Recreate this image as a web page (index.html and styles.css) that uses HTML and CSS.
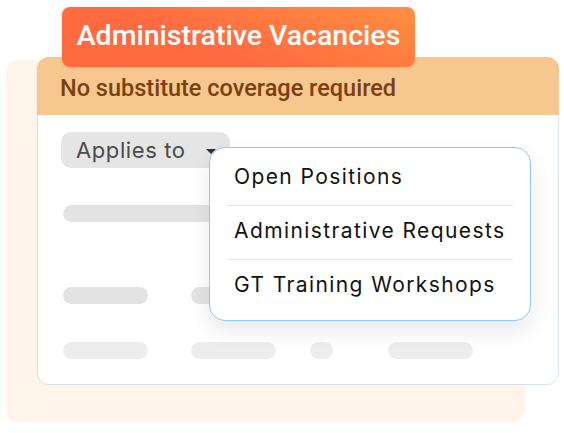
FILE: index.html
```html
<!DOCTYPE html>
<html lang="en">
<head>
    <meta charset="UTF-8">
    <meta name="viewport" content="width=device-width, initial-scale=1.0">
    <title>Administrative Vacancies</title>
    <link rel="stylesheet" href="styles.css">
</head>
<body>
    <div class="scene">
        <div class="backdrop"></div>

        <div class="tab">Administrative Vacancies</div>

        <div class="card">
            <div class="card-head">No substitute coverage required</div>
            <div class="card-body">
                <div class="select">
                    <span>Applies to</span>
                    <span class="caret"></span>
                </div>

                <div class="skeleton row-one">
                    <span class="bar wide"></span>
                </div>
                <div class="skeleton row-two">
                    <span class="bar"></span>
                    <span class="bar gap-a"></span>
                </div>
                <div class="skeleton row-three">
                    <span class="bar light"></span>
                    <span class="bar light gap-a"></span>
                    <span class="bar light small gap-b"></span>
                    <span class="bar light gap-c"></span>
                </div>
            </div>

            <ul class="menu">
                <li>Open Positions</li>
                <li>Administrative Requests</li>
                <li>GT Training Workshops</li>
            </ul>
        </div>
    </div>
</body>
</html>
```

FILE: styles.css
```css
* {
    box-sizing: border-box;
}
body {
    margin: 0;
    background: #ffffff;
    font-family: Roboto, "Liberation Sans", sans-serif;
}
.scene {
    position: relative;
    width: 564px;
    height: 433px;
    padding-top: 7px;
}
.backdrop {
    position: absolute;
    left: 6px;
    top: 60px;
    width: 519px;
    height: 362px;
    background: #fef4ea;
    border-radius: 12px;
}
.tab {
    position: relative;
    z-index: 2;
    display: inline-block;
    margin-left: 62px;
    height: 60px;
    width: 353px;
    line-height: 58px;
    text-align: center;
    color: #ffffff;
    font-size: 28.5px;
    font-weight: 500;
    background: linear-gradient(200deg, #ff8f42 0%, #ff6b40 60%, #ff6a3f 100%);
    border-radius: 8px;
    box-shadow: 0 1px 3px rgba(200, 80, 30, 0.15);
}
.card {
    position: relative;
    z-index: 1;
    margin: -10px 0 0 37px;
    width: 522px;
    height: 328px;
    background: #ffffff;
    border: 1px solid #d2e3f1;
    border-radius: 12px;
}
.card-head {
    height: 58px;
    margin: -1px -1px 0;
    padding: 15px 0 0 23px;
    background: #f6c78f;
    border-radius: 12px 12px 0 0;
    color: #7b3f12;
    font-size: 23.5px;
    font-weight: 500;
    line-height: 32px;
}
.card-body {
    padding: 17px 0 0 23px;
}
.select {
    display: flex;
    align-items: center;
    width: 169px;
    height: 36px;
    padding-left: 15px;
    background: #e5e5e5;
    border-radius: 10px;
    color: #4b4b4b;
    font-family: Inter, "Open Sans", sans-serif;
    font-size: 22px;
    letter-spacing: 0.6px;
}
.caret {
    margin-left: 20px;
    margin-top: 2px;
    width: 0;
    height: 0;
    border-left: 5px solid transparent;
    border-right: 5px solid transparent;
    border-top: 5px solid #333;
}
.skeleton {
    display: flex;
    padding-left: 2px;
}
.row-one {
    margin-top: 37px;
}
.row-two {
    margin-top: 65px;
}
.row-three {
    margin-top: 38px;
}
.bar {
    display: block;
    width: 85px;
    height: 17px;
    border-radius: 9px;
    background: #e3e3e3;
}
.bar.wide {
    width: 200px;
}
.bar.light {
    background: #ededed;
}
.bar.small {
    width: 23px;
}
.gap-a {
    margin-left: 43px;
}
.gap-b {
    margin-left: 34px;
}
.gap-c {
    margin-left: 55px;
}
.menu {
    position: absolute;
    left: 171px;
    top: 89px;
    width: 322px;
    height: 174px;
    margin: 0;
    padding: 4px 17px 6px;
    list-style: none;
    background: #ffffff;
    border: 1px solid #8fc9f7;
    border-radius: 16px;
    box-shadow: 0 10px 22px rgba(0, 0, 0, 0.09);
}
.menu li {
    height: 53px;
    padding: 0 0 4px 7px;
    display: flex;
    align-items: center;
    color: #121212;
    font-family: Inter, "Open Sans", sans-serif;
    font-size: 21px;
    font-weight: 400;
    letter-spacing: 1.4px;
}
.menu li + li {
    border-top: 1px solid #ece8dc;
    height: 54px;
}
```
